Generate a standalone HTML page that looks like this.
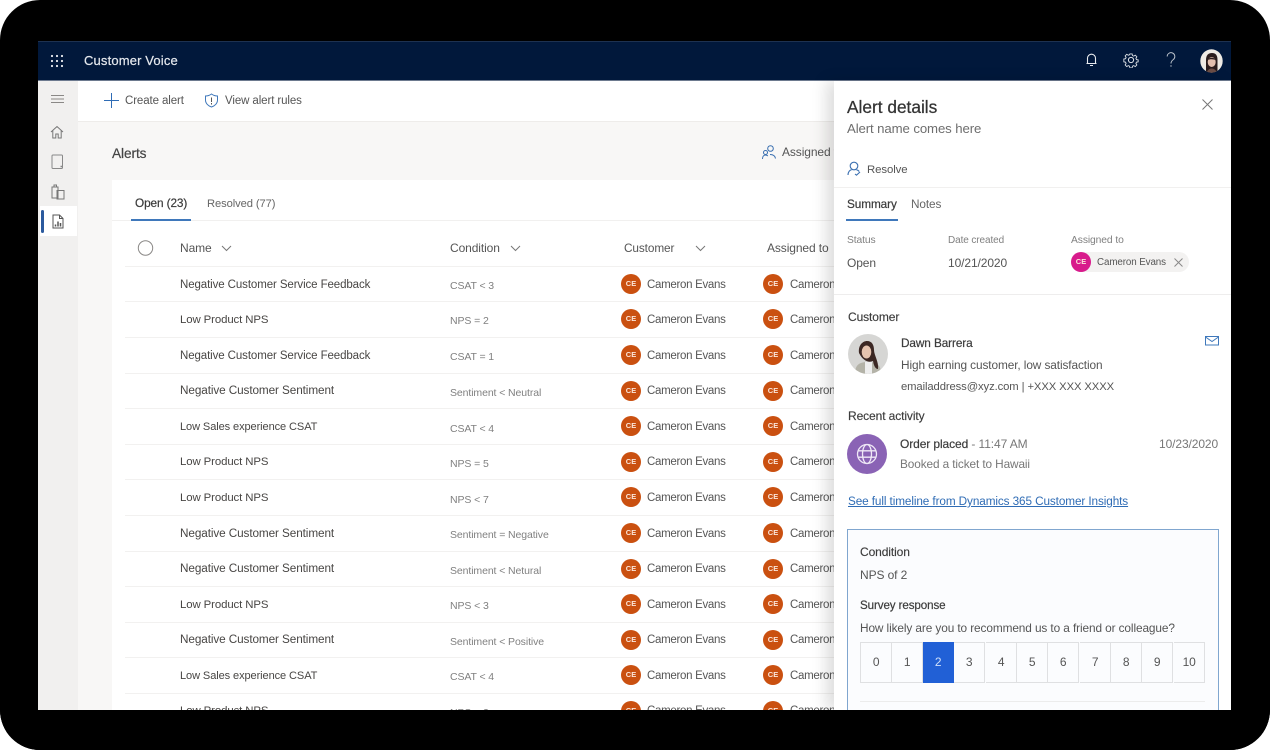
<!DOCTYPE html>
<html><head><meta charset="utf-8"><title>Customer Voice</title>
<style>
html,body{margin:0;padding:0;width:1270px;height:750px;overflow:hidden;background:#fff}
body{position:relative;font-family:"Liberation Sans",sans-serif;font-size:12px;color:#444;letter-spacing:-.1px}
.frame{position:absolute;left:0;top:0;width:1270px;height:750px;background:#000;border-radius:40px;overflow:hidden;filter:blur(.3px)}
.a{position:absolute}
.t{position:absolute;line-height:16px;white-space:nowrap}
.row{position:absolute;left:125px;width:710px;height:1px;background:#f2f1f0}
.av{position:absolute;width:20px;height:20px;border-radius:50%;background:#ca5010;color:#fbe6da;font-size:7.5px;line-height:20px;text-align:center;font-weight:bold;letter-spacing:0}
.n{color:#484644;left:180px;font-size:11.5px;margin-top:1px}
.n.s{font-size:11.75px}
.n.p{font-size:11.4px}
.n.l{font-size:11.05px}
.c{color:#808080;left:450px;font-size:10.5px}
.cu{color:#555;left:647px;font-size:11.5px;letter-spacing:-.3px;margin-top:1px}
.as{color:#555;left:790px;font-size:11.5px;letter-spacing:-.3px;margin-top:1px}
.num{position:absolute;top:642px;height:39px;width:30.3px;border:1px solid #dfe0e2;border-left:0;line-height:39px;text-align:center;font-size:12px;color:#555;background:#fbfcfe;box-sizing:content-box}
</style></head><body>
<div class="frame">
<div class="a" style="left:38px;top:41px;width:1193px;height:669px;background:#f8f7f6;overflow:hidden"></div>

<!-- header -->
<div class="a" style="left:38px;top:41px;width:1193px;height:40px;background:#01183b;border-bottom:1px solid #6d7a8f;border-top:1px solid #1d3150;box-sizing:border-box"></div>
<svg class="a" style="left:50px;top:54px" width="14" height="14" fill="#e8ebef"><circle cx="2" cy="2" r="1.1"/><circle cx="7" cy="2" r="1.1"/><circle cx="12" cy="2" r="1.1"/><circle cx="2" cy="7" r="1.1"/><circle cx="7" cy="7" r="1.1"/><circle cx="12" cy="7" r="1.1"/><circle cx="2" cy="12" r="1.1"/><circle cx="7" cy="12" r="1.1"/><circle cx="12" cy="12" r="1.1"/></svg>
<div class="t" style="left:84px;top:53px;color:#e6e9ee;font-size:13px;letter-spacing:.15px;-webkit-text-stroke:.2px #e6e9ee">Customer Voice</div>
<svg class="a" style="left:1084px;top:52px" width="15" height="16" fill="none" stroke="#e8ebef" stroke-width="1.1"><path d="M3.500 11V6.200a4 4 0 0 1 8 0V11M2.500 11.500h10M6 13.500h3"/></svg>
<svg class="a" style="left:1123px;top:52px" width="16" height="16" fill="none" stroke="#dfe3e8" stroke-width="1"><circle cx="8" cy="8" r="2.600"/><path d="M6.700 1h2.600l.4 2 1.400.6 1.800-1.100 1.800 1.800-1.100 1.800.6 1.400 2 .4v2.200l-2 .4-.6 1.400 1.100 1.800-1.800 1.800-1.800-1.100-1.400.6-.4 2H6.700l-.4-2-1.400-.6-1.800 1.100-1.800-1.800 1.100-1.800-.6-1.400-2-.4V6.900l2-.4.6-1.400-1.100-1.800 1.800-1.800 1.800 1.100 1.400-.6z" transform="translate(1 1) scale(.875)"/></svg>
<svg class="a" style="left:1164px;top:52px" width="14" height="18" fill="none" stroke="#b9c0ca" stroke-width="1"><path d="M3.200 4.500a3.800 3.800 0 1 1 6 3.100C8 8.500 7 9.300 7 11.500"/><circle cx="7" cy="14" r=".7" fill="#b9c0ca" stroke="none"/></svg>
<svg class="a" style="left:1200px;top:49px" width="23" height="24"><defs><clipPath id="u"><ellipse cx="11.500" cy="12" rx="11.200" ry="11.700"/></clipPath></defs><g clip-path="url(#u)"><rect width="23" height="24" fill="#eeeae4"/><path d="M6 24V11C6 6 8.500 4 12 4s5.500 2 5.500 7v13z" fill="#2a1c1c"/><ellipse cx="11.700" cy="13" rx="4" ry="5" fill="#e3bfae"/><path d="M7.500 11c1-3 7-3 8.500 0-3-1-6-1-8.500 0z" fill="#2a1c1c"/><path d="M7 24c0-3 2.500-4.500 4.700-4.500S16.500 21 16.500 24z" fill="#6b4d46"/></g></svg>

<!-- sidebar -->
<div class="a" style="left:38px;top:81px;width:40px;height:629px;background:#f1f0ef"></div>
<div class="a" style="left:40px;top:206px;width:37px;height:30px;background:#fff"></div>
<div class="a" style="left:41px;top:210px;width:3px;height:23px;background:#2b5a9e;border-radius:2px"></div>
<svg class="a" style="left:50px;top:92px" width="15" height="15" stroke="#8a8886" stroke-width="1" fill="none"><path d="M1 3.500h13M1 7h13M1 10.500h13"/></svg>
<svg class="a" style="left:50px;top:125px" width="14" height="14" fill="none" stroke="#777" stroke-width="1"><path d="M1 7 7 1.500 13 7M2.800 5.500V13h3V9h2.400v4h3V5.500"/></svg>
<svg class="a" style="left:51px;top:154px" width="13" height="16" fill="none" stroke="#888" stroke-width="1"><rect x="1" y="1" width="10.500" height="13.500" rx="1"/><path d="M9.500 12.500h2" stroke-width="1.500"/></svg>
<svg class="a" style="left:51px;top:184px" width="14" height="16" fill="none" stroke="#777" stroke-width="1"><path d="M1 3h6v11H1zM3 3V1h2.500v2M6 6.500h7V15H6z"/></svg>
<svg class="a" style="left:52px;top:214px" width="12" height="15" fill="none" stroke="#555" stroke-width="1"><path d="M1 1h6.500L11 4.500V14H1zM7.500 1v3.500H11"/><path d="M3.500 12.500v-2M6 12.500V7.500M8.500 12.500V9" stroke-width="1.500"/></svg>

<!-- toolbar -->
<div class="a" style="left:78px;top:81px;width:760px;height:40px;background:#fff;border-bottom:1px solid #eeecea;box-sizing:content-box"></div>
<svg class="a" style="left:104px;top:93px" width="15" height="15" stroke="#2f6cb5" stroke-width="1" fill="none"><path d="M7.500 0v15M0 7.500h15"/></svg>
<div class="t" style="left:125px;top:93px;color:#555;font-size:11.500px">Create alert</div>
<svg class="a" style="left:204px;top:93px" width="15" height="15" fill="none" stroke="#3f78bb" stroke-width="1"><path d="M7.500 1C5.500 2.500 3.500 3 1.500 3v4c0 3.500 2.800 6 6 7 3.200-1 6-3.500 6-7V3c-2 0-4-.5-6-2z"/><path d="M7.500 4.500v4.500M7.500 10v1.500" stroke="#555"/></svg>
<div class="t" style="left:225px;top:93px;color:#555;font-size:11.500px">View alert rules</div>

<div class="t" style="left:112px;top:146px;font-size:13.700px;color:#444;-webkit-text-stroke:.2px #444">Alerts</div>
<svg class="a" style="left:761px;top:144px" width="16" height="16" fill="none" stroke="#3a6fb0" stroke-width="1"><circle cx="9.500" cy="4.500" r="2.800"/><circle cx="4.500" cy="8.500" r="2"/><path d="M1.500 15c0-2.500 1.200-4 3-4 1 0 1.800.4 2.300 1M9 10.500c2.500 0 5 1 5.500 4"/></svg>
<div class="t" style="left:782px;top:144px;color:#555">Assigned t</div>

<!-- card -->
<div class="a" style="left:112px;top:180px;width:730px;height:530px;background:#fff"></div>
<div class="a" style="left:112px;top:220px;width:730px;height:1px;background:#f1f0ef"></div>
<div class="t" style="left:135px;top:195px;color:#3a3a3a;font-size:11.800px;-webkit-text-stroke:.2px #3a3a3a">Open (23)</div>
<div class="t" style="left:207px;top:196px;color:#666;font-size:11.200px">Resolved (77)</div>
<div class="a" style="left:131px;top:218.500px;width:60px;height:2px;background:#3f78bb"></div>
<svg class="a" style="left:137px;top:240px" width="17" height="17" fill="none" stroke="#8a8886"><circle cx="8.500" cy="8" r="7.200"/></svg>

<div class="t" style="left:180px;top:240px;color:#555">Name</div>
<svg class="a" style="left:221px;top:245px" width="11" height="7" fill="none" stroke="#777"><path d="M1 1l4.500 4.500L10 1"/></svg>
<div class="t" style="left:450px;top:240px;color:#555">Condition</div>
<svg class="a" style="left:510px;top:245px" width="11" height="7" fill="none" stroke="#777"><path d="M1 1l4.500 4.500L10 1"/></svg>
<div class="t" style="left:624px;top:240px;color:#555;font-size:11.800px">Customer</div>
<svg class="a" style="left:695px;top:245px" width="11" height="7" fill="none" stroke="#777"><path d="M1 1l4.500 4.500L10 1"/></svg>
<div class="t" style="left:767px;top:240px;color:#555">Assigned to</div>

<div class="row" style="top:265.500px"></div>
<div class="row" style="top:301px"></div>
<div class="row" style="top:337px"></div>
<div class="row" style="top:372.500px"></div>
<div class="row" style="top:408px"></div>
<div class="row" style="top:443.500px"></div>
<div class="row" style="top:479px"></div>
<div class="row" style="top:515px"></div>
<div class="row" style="top:550.500px"></div>
<div class="row" style="top:586px"></div>
<div class="row" style="top:621.500px"></div>
<div class="row" style="top:657px"></div>
<div class="row" style="top:692.500px"></div>

<div class="t n" style="top:276px">Negative Customer Service Feedback</div><div class="t c" style="top:278px">CSAT &lt; 3</div><div class="av" style="left:621px;top:274px">CE</div><div class="t cu" style="top:276px">Cameron Evans</div><div class="av" style="left:763px;top:274px">CE</div><div class="t as" style="top:276px">Cameron Evans</div>
<div class="t n p" style="top:311px">Low Product NPS</div><div class="t c" style="top:313px">NPS = 2</div><div class="av" style="left:621px;top:309px">CE</div><div class="t cu" style="top:311px">Cameron Evans</div><div class="av" style="left:763px;top:309px">CE</div><div class="t as" style="top:311px">Cameron Evans</div>
<div class="t n" style="top:347px">Negative Customer Service Feedback</div><div class="t c" style="top:349px">CSAT = 1</div><div class="av" style="left:621px;top:345px">CE</div><div class="t cu" style="top:347px">Cameron Evans</div><div class="av" style="left:763px;top:345px">CE</div><div class="t as" style="top:347px">Cameron Evans</div>
<div class="t n s" style="top:382px">Negative Customer Sentiment</div><div class="t c" style="top:385px">Sentiment &lt; Neutral</div><div class="av" style="left:621px;top:381px">CE</div><div class="t cu" style="top:382px">Cameron Evans</div><div class="av" style="left:763px;top:381px">CE</div><div class="t as" style="top:382px">Cameron Evans</div>
<div class="t n l" style="top:418px">Low Sales experience CSAT</div><div class="t c" style="top:421px">CSAT &lt; 4</div><div class="av" style="left:621px;top:416px">CE</div><div class="t cu" style="top:418px">Cameron Evans</div><div class="av" style="left:763px;top:416px">CE</div><div class="t as" style="top:418px">Cameron Evans</div>
<div class="t n p" style="top:453px">Low Product NPS</div><div class="t c" style="top:456px">NPS = 5</div><div class="av" style="left:621px;top:452px">CE</div><div class="t cu" style="top:453px">Cameron Evans</div><div class="av" style="left:763px;top:452px">CE</div><div class="t as" style="top:453px">Cameron Evans</div>
<div class="t n p" style="top:489px">Low Product NPS</div><div class="t c" style="top:492px">NPS &lt; 7</div><div class="av" style="left:621px;top:487px">CE</div><div class="t cu" style="top:489px">Cameron Evans</div><div class="av" style="left:763px;top:487px">CE</div><div class="t as" style="top:489px">Cameron Evans</div>
<div class="t n s" style="top:525px">Negative Customer Sentiment</div><div class="t c" style="top:527px">Sentiment = Negative</div><div class="av" style="left:621px;top:523px">CE</div><div class="t cu" style="top:525px">Cameron Evans</div><div class="av" style="left:763px;top:523px">CE</div><div class="t as" style="top:525px">Cameron Evans</div>
<div class="t n s" style="top:560px">Negative Customer Sentiment</div><div class="t c" style="top:563px">Sentiment &lt; Netural</div><div class="av" style="left:621px;top:559px">CE</div><div class="t cu" style="top:560px">Cameron Evans</div><div class="av" style="left:763px;top:559px">CE</div><div class="t as" style="top:560px">Cameron Evans</div>
<div class="t n p" style="top:596px">Low Product NPS</div><div class="t c" style="top:598px">NPS &lt; 3</div><div class="av" style="left:621px;top:594px">CE</div><div class="t cu" style="top:596px">Cameron Evans</div><div class="av" style="left:763px;top:594px">CE</div><div class="t as" style="top:596px">Cameron Evans</div>
<div class="t n s" style="top:631px">Negative Customer Sentiment</div><div class="t c" style="top:634px">Sentiment &lt; Positive</div><div class="av" style="left:621px;top:630px">CE</div><div class="t cu" style="top:631px">Cameron Evans</div><div class="av" style="left:763px;top:630px">CE</div><div class="t as" style="top:631px">Cameron Evans</div>
<div class="t n l" style="top:667px">Low Sales experience CSAT</div><div class="t c" style="top:669px">CSAT &lt; 4</div><div class="av" style="left:621px;top:665px">CE</div><div class="t cu" style="top:667px">Cameron Evans</div><div class="av" style="left:763px;top:665px">CE</div><div class="t as" style="top:667px">Cameron Evans</div>
<div class="t n p" style="top:702px">Low Product NPS</div><div class="t c" style="top:705px">NPS = 2</div><div class="av" style="left:621px;top:701px">CE</div><div class="t cu" style="top:702px">Cameron Evans</div><div class="av" style="left:763px;top:701px">CE</div><div class="t as" style="top:702px">Cameron Evans</div>

<!-- panel -->
<div class="a" style="left:834px;top:81px;width:397px;height:629px;background:#fff;box-shadow:-8px 0 14px rgba(0,0,0,.13)"></div>
<div class="t" style="left:847px;top:97px;font-size:17.300px;line-height:20px;color:#333;letter-spacing:0;-webkit-text-stroke:.25px #333">Alert details</div>
<div class="t" style="left:847px;top:120.500px;font-size:13.200px;color:#6e6e6e">Alert name comes here</div>
<svg class="a" style="left:1202px;top:99px" width="11" height="11" stroke="#777" stroke-width="1"><path d="M.5.500l10 10M10.500.500l-10 10"/></svg>
<svg class="a" style="left:847px;top:161px" width="14" height="15" fill="none" stroke="#3a6fb0" stroke-width="1.100"><circle cx="7" cy="5" r="3.800"/><path d="M1 14c0-3 1.800-5 3.500-5.200M9.500 8.800c1 .2 2 .7 2.700 1.700M8 13l1.500 1.200L13 11"/></svg>
<div class="t" style="left:867px;top:162px;color:#555;font-size:11.400px">Resolve</div>
<div class="a" style="left:834px;top:186.500px;width:397px;height:1px;background:#f1f0ef"></div>
<div class="t" style="left:847px;top:196px;color:#3a3a3a;-webkit-text-stroke:.2px #3a3a3a;font-size:11.800px">Summary</div>
<div class="t" style="left:911px;top:196px;color:#666;font-size:11.800px">Notes</div>
<div class="a" style="left:846px;top:219px;width:52px;height:2px;background:#3f78bb"></div>
<div class="t" style="left:847px;top:233px;font-size:10.300px;color:#808080">Status</div>
<div class="t" style="left:948px;top:233px;font-size:10px;color:#808080">Date created</div>
<div class="t" style="left:1071px;top:233px;font-size:10.300px;color:#808080">Assigned to</div>
<div class="t" style="left:847px;top:255px;color:#555">Open</div>
<div class="t" style="left:948px;top:255px;color:#555">10/21/2020</div>
<div class="a" style="left:1071px;top:252px;width:118px;height:20px;background:#f3f2f1;border-radius:10px"></div>
<div class="av" style="left:1071px;top:252px;background:#d81b8c">CE</div>
<div class="t" style="left:1097px;top:254.500px;font-size:9.800px;color:#555">Cameron Evans</div>
<svg class="a" style="left:1174px;top:258px" width="9" height="9" stroke="#888" stroke-width="1"><path d="M.5.500l8 8M8.500.500l-8 8"/></svg>
<div class="a" style="left:834px;top:293.500px;width:397px;height:1px;background:#eeeded"></div>

<div class="t" style="left:848px;top:309px;color:#3c3c3c;-webkit-text-stroke:.15px #3c3c3c">Customer</div>
<svg class="a" style="left:848px;top:334px" width="40" height="40"><defs><clipPath id="d"><circle cx="20" cy="20" r="20"/></clipPath></defs><g clip-path="url(#d)"><rect width="40" height="40" fill="#d6d6d4"/><path d="M7 40c0-9 4-12 13-12s13 3 13 12z" fill="#b4b3a8"/><path d="M17 40V28h7v12z" fill="#eee"/><path d="M11 19c-1-8 4-12 8-12 5 0 7 4 7 9 0 5 5 12 4 19-2 0-4-2-5-8-4 2-10 0-14-8z" fill="#3b2723"/><ellipse cx="18.500" cy="18" rx="4.800" ry="6.500" fill="#e5c3ae"/></g></svg>
<div class="t" style="left:901px;top:335px;color:#3c3c3c;-webkit-text-stroke:.2px #3c3c3c;font-size:11.800px">Dawn Barrera</div>
<div class="t" style="left:901px;top:357px;color:#555;font-size:11.850px">High earning customer, low satisfaction</div>
<div class="t" style="left:901px;top:379px;color:#555;font-size:11.250px">emailaddress@xyz.com | +XXX XXX XXXX</div>
<svg class="a" style="left:1205px;top:336px" width="14" height="10" fill="none" stroke="#3f78bb" stroke-width="1"><rect x=".5" y=".5" width="13" height="8.500"/><path d="M.5 1 7 5.500 13.500 1"/></svg>

<div class="t" style="left:848px;top:408px;color:#3c3c3c;-webkit-text-stroke:.15px #3c3c3c">Recent activity</div>
<div class="a" style="left:847px;top:434px;width:40px;height:40px;border-radius:50%;background:#8a63b5"></div>
<svg class="a" style="left:856px;top:443px" width="22" height="22" fill="none" stroke="#efe8f6" stroke-width="1.300"><circle cx="11" cy="11" r="9.500"/><ellipse cx="11" cy="11" rx="4.500" ry="9.500"/><path d="M2 7.800h18M2 14.200h18"/></svg>
<div class="t" style="left:900px;top:436px;color:#3c3c3c"><span style="-webkit-text-stroke:.2px #3c3c3c">Order placed</span> <span style="color:#777">- 11:47 AM</span></div>
<div class="t" style="left:900px;top:456px;color:#777;font-size:11.800px">Booked a ticket to Hawaii</div>
<div class="t" style="left:1159px;top:436px;color:#777">10/23/2020</div>
<div class="t" style="left:848px;top:494px;color:#2f6cb5;text-decoration:underline;font-size:11.750px">See full timeline from Dynamics 365 Customer Insights</div>

<div class="a" style="left:847px;top:529px;width:372px;height:190px;background:#fbfcfe;border:1px solid #80a6cf;box-sizing:border-box"></div>
<div class="t" style="left:860px;top:544px;color:#3c3c3c;-webkit-text-stroke:.15px #3c3c3c">Condition</div>
<div class="t" style="left:860px;top:567px;color:#555">NPS of 2</div>
<div class="t" style="left:860px;top:598px;color:#3c3c3c;-webkit-text-stroke:.2px #3c3c3c;font-size:11.600px">Survey response</div>
<div class="t" style="left:860px;top:620px;color:#555;font-size:11.830px">How likely are you to recommend us to a friend or colleague?</div>

<div class="num" style="left:860px;border-left:1px solid #dfe0e2">0</div>
<div class="num" style="left:892px">1</div>
<div class="num" style="left:923px;background:#2160d6;color:#cfe0fa;border-color:#2160d6">2</div>
<div class="num" style="left:954px">3</div>
<div class="num" style="left:986px">4</div>
<div class="num" style="left:1017px">5</div>
<div class="num" style="left:1048px">6</div>
<div class="num" style="left:1080px">7</div>
<div class="num" style="left:1111px">8</div>
<div class="num" style="left:1142px">9</div>
<div class="num" style="left:1174px">10</div>
<div class="a" style="left:860px;top:701px;width:345px;height:1px;background:#ececec"></div>

<!-- bottom mask -->
<div class="a" style="left:0;top:710px;width:1270px;height:40px;background:#000"></div>
</div>
</body></html>
